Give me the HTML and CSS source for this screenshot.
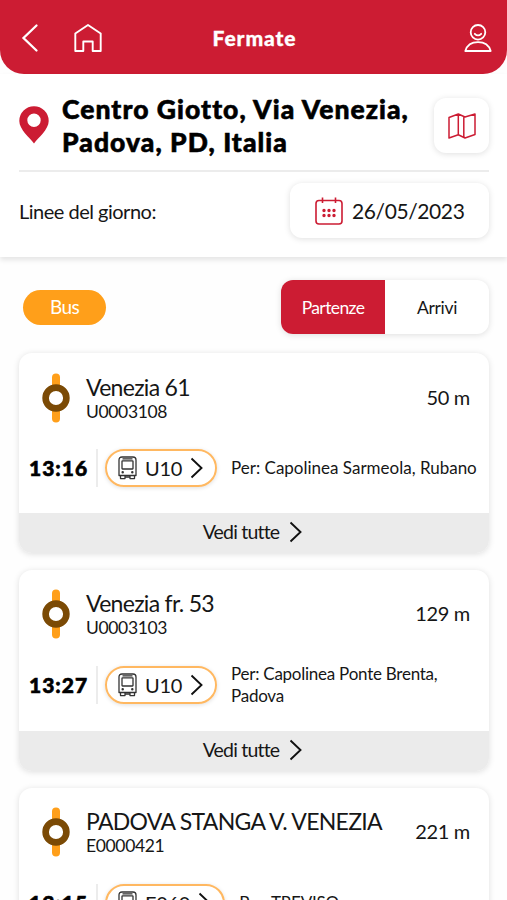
FILE: index.html
```html
<!DOCTYPE html>
<html lang="it">
<head>
	<meta charset="UTF-8">
	<meta name="viewport" content="width=device-width, initial-scale=1">
	<title>Fermate</title>
	<link rel="stylesheet" href="styles.css">
</head>
<body>
	<!-- shared icons -->
	<svg class="sprite" width="0" height="0">
		<symbol id="ico-stop" viewBox="0 0 28 50">
			<path d="M14 4.500V45.500" stroke="#ff9f1a" stroke-width="8" stroke-linecap="round"/>
			<circle cx="14" cy="25" r="10.400" fill="#fff" stroke="#7b4a05" stroke-width="6.600"/>
		</symbol>
		<symbol id="ico-bus" viewBox="0 0 19 24">
			<g fill="none" stroke="#333" stroke-width="1.300" stroke-linejoin="round">
				<path d="M1 19.500V4Q1 1 4 1H15Q18 1 18 4V19.500Z"/>
				<rect x="4" y="4.800" width="11" height="8.200" rx=".5"/>
				<path d="M4.500 2.900H14.500M2.500 19.500V22.600H7V19.500M12 19.500V22.600H16.500V19.500M7 21H12"/>
				<circle cx="4.700" cy="16.200" r=".6"/>
				<circle cx="14.300" cy="16.200" r=".6"/>
			</g>
		</symbol>
		<symbol id="ico-next" viewBox="0 0 13 22">
			<path d="M1.500 1.500L11.500 11L1.500 20.500" fill="none" stroke="#111" stroke-width="1.900"/>
		</symbol>
	</svg>

	<header class="topbar">
		<svg class="back" width="18" height="30" viewBox="0 0 18 30"><path d="M15.500 2.500L2.500 15L15.500 27.500" fill="none" stroke="#fff" stroke-width="2.300" stroke-linecap="round"/></svg>
		<svg class="home" width="28" height="30" viewBox="0 0 28 30"><path d="M1.300 10.500L14 2L26.700 10.500V28H18.700V18.500H9.300V28H1.300Z" fill="none" stroke="#fff" stroke-width="1.900" stroke-linejoin="round"/></svg>
		<h1>Fermate</h1>
		<svg class="user" width="28" height="30" viewBox="0 0 28 30">
			<g fill="none" stroke="#fff" stroke-width="1.800" stroke-linejoin="round" stroke-linecap="round">
				<circle cx="14" cy="9.300" r="7.300"/>
				<path d="M10.800 10.800Q14 14 17.200 10.800M1.300 28Q4 19.200 14 19.200T26.700 28Z"/>
			</g>
		</svg>
	</header>

	<section class="place">
		<div class="address">
			<svg class="pin" width="30" height="38" viewBox="0 0 30 38"><path fill-rule="evenodd" d="M15 37.500C11 32 .300 23.500 .300 15A14.700 14.700 0 0 1 29.700 15C29.700 23.500 19 32 15 37.500ZM15 7.600a6.700 6.700 0 1 0 0 13.400a6.700 6.700 0 1 0 0-13.400Z" fill="#cc1c33"/></svg>
			<h2>Centro Giotto, Via Venezia,<br>Padova, PD, Italia</h2>
			<a class="map" href="#">
				<svg width="28" height="26" viewBox="0 0 28 26"><path d="M1 4.500L10.300 1L17 4L27 1V21.500L17 25L10.300 21.800L1 25ZM10.300 1V21.800M15.800 4V24.600" fill="none" stroke="#cc1c33" stroke-width="1.500" stroke-linejoin="round"/></svg>
			</a>
		</div>
		<div class="day">
			<span class="day-label">Linee del giorno:</span>
			<a class="date" href="#">
				<svg width="28" height="28" viewBox="0 0 28 28">
					<rect x="1" y="3.500" width="26" height="23.500" rx="3" fill="none" stroke="#cc1c33" stroke-width="1.600"/>
					<path d="M7.500 .500V6M20.500 .500V6" stroke="#cc1c33" stroke-width="1.600"/>
					<path d="M9 13.500v.01M14 13.500v.01M19 13.500v.01M9 18.500v.01M14 18.500v.01M19 18.500v.01" stroke="#cc1c33" stroke-width="3.400" stroke-linecap="round"/>
				</svg>
				<span>26/05/2023</span>
			</a>
		</div>
	</section>

	<div class="filters">
		<a class="bus" href="#">Bus</a>
		<div class="switch">
			<a class="on" href="#">Partenze</a>
			<a href="#">Arrivi</a>
		</div>
	</div>

	<ul class="stops">
		<li class="card">
			<div class="stop">
				<svg width="28" height="50"><use href="#ico-stop"/></svg>
				<div class="name">
					<h3>Venezia 61</h3>
					<p>U0003108</p>
				</div>
				<span class="distance">50 m</span>
			</div>
			<div class="ride">
				<b class="time">13:16</b>
				<a class="line" href="#">
					<svg width="19" height="24"><use href="#ico-bus"/></svg>
					<span>U10</span>
					<svg width="13" height="22"><use href="#ico-next"/></svg>
				</a>
				<p class="to">Per: Capolinea Sarmeola, Rubano</p>
			</div>
			<a class="all" href="#"><span>Vedi tutte</span><svg width="13" height="22"><use href="#ico-next"/></svg></a>
		</li>
		<li class="card tall">
			<div class="stop">
				<svg width="28" height="50"><use href="#ico-stop"/></svg>
				<div class="name">
					<h3>Venezia fr. 53</h3>
					<p>U0003103</p>
				</div>
				<span class="distance">129 m</span>
			</div>
			<div class="ride">
				<b class="time">13:27</b>
				<a class="line" href="#">
					<svg width="19" height="24"><use href="#ico-bus"/></svg>
					<span>U10</span>
					<svg width="13" height="22"><use href="#ico-next"/></svg>
				</a>
				<p class="to">Per: Capolinea Ponte Brenta,<br>Padova</p>
			</div>
			<a class="all" href="#"><span>Vedi tutte</span><svg width="13" height="22"><use href="#ico-next"/></svg></a>
		</li>
		<li class="card tall">
			<div class="stop">
				<svg width="28" height="50"><use href="#ico-stop"/></svg>
				<div class="name">
					<h3>PADOVA STANGA V. VENEZIA</h3>
					<p>E0000421</p>
				</div>
				<span class="distance">221 m</span>
			</div>
			<div class="ride">
				<b class="time">13:15</b>
				<a class="line" href="#">
					<svg width="19" height="24"><use href="#ico-bus"/></svg>
					<span>E060</span>
					<svg width="13" height="22"><use href="#ico-next"/></svg>
				</a>
				<p class="to">Per: TREVISO</p>
			</div>
		</li>
	</ul>
</body>
</html>
```

FILE: styles.css
```css
*{margin:0;padding:0;box-sizing:border-box;}
html,body{
	height: 900px;
	overflow: hidden;
}
body{
	background: #fefefe;
	color: #161616;
	font-family: Lato,"Liberation Sans",sans-serif;
}
a{color: inherit;text-decoration: none;}
ul{list-style: none;}
svg{display: block;flex: none;}
.sprite{position: absolute;}

/* header */
.topbar{
	display: flex;
	align-items: center;
	height: 74px;
	padding: 2px 15px 0 21px;
	background: #cc1c33;
	color: #fff;
	border-radius: 0 0 24px 24px;
}
.home{margin-left: 35px;}
.topbar h1{
	flex: 1;
	padding-right: 57px;
	margin-top: -2px;
	text-align: center;
	font-size: 21px;
	font-weight: 900;
	letter-spacing: .9px;
	-webkit-text-stroke: .3px #fff;
}

/* address and date */
.place{
	height: 183px;
	padding: 20px 18px 0 19px;
	background: #fff;
	box-shadow: 0 3px 5px rgba(0,0,0,.1);
}
.address{
	display: flex;
	align-items: center;
	height: 78px;
	border-bottom: 2px solid #ececec;
	padding-bottom: 13px;
}
.pin{margin: -2px 13px 0 0;}
.address h2{
	flex: 1;
	white-space: nowrap;
	color: #000;
	font-size: 26.5px;
	line-height: 33px;
	font-weight: 900;
	letter-spacing: 1.05px;
	-webkit-text-stroke: .6px #000;
}
.map,.date,.switch{
	background: #fff;
	border-radius: 12px;
	box-shadow: 0 1px 6px rgba(0,0,0,.13);
}
.map{
	display: flex;
	align-items: center;
	justify-content: center;
	width: 55px;
	height: 55px;
}
.day{
	display: flex;
	align-items: center;
	justify-content: space-between;
	padding-top: 11px;
}
.day-label{
	font-size: 20px;
	letter-spacing: -.5px;
}
.date{
	display: flex;
	align-items: center;
	gap: 9px;
	width: 199px;
	height: 55px;
	padding-left: 25px;
	font-size: 21px;
	letter-spacing: -.4px;
}

/* filters */
.filters{
	display: flex;
	align-items: center;
	justify-content: space-between;
	padding: 23px 18px 0 23px;
}
.bus{
	width: 83px;
	height: 35px;
	line-height: 34px;
	border-radius: 18px;
	background: #ff9f1a;
	color: #fff;
	font-size: 19px;
	letter-spacing: -.6px;
	text-align: center;
}
.switch{
	display: flex;
	width: 208px;
	height: 54px;
	overflow: hidden;
}
.switch a{
	flex: 1;
	line-height: 56px;
	font-size: 17.5px;
	letter-spacing: -.3px;
	text-align: center;
}
.switch .on{
	background: #cc1c33;
	color: #fff;
	letter-spacing: -.6px;
}

/* stops */
.stops{
	display: grid;
	gap: 17px;
	padding: 19px 18px 0 19px;
}
.card{
	display: flex;
	flex-direction: column;
	height: 200px;
	border-radius: 13px;
	background: #fff;
	box-shadow: 0 1px 6px rgba(0,0,0,.13);
	overflow: hidden;
}
.card.tall{height: 201px;}
.stop{
	display: flex;
	align-items: center;
	height: 90px;
	padding: 0 19px 0 23px;
}
.tall .stop{height: 88px;}
.name{
	flex: 1;
	padding-left: 16px;
	white-space: nowrap;
}
.name h3{
	font-size: 23px;
	line-height: 26px;
	font-weight: 400;
	letter-spacing: -.7px;
}
.name p{
	font-size: 17.5px;
	line-height: 23px;
	letter-spacing: -.35px;
}
.distance{
	padding-bottom: 2px;
	font-size: 20px;
	letter-spacing: -.3px;
}
.ride{
	display: flex;
	align-items: center;
	height: 38px;
	margin-top: 6px;
	padding-left: 10px;
}
.tall .ride{margin-top: 8px;}
.time{
	width: 69px;
	height: 38px;
	line-height: 37px;
	border-right: 2px solid #ececec;
	color: #000;
	font-size: 21px;
	font-weight: 900;
	letter-spacing: 1px;
	-webkit-text-stroke: .6px #000;
}
.line{
	display: flex;
	align-items: center;
	height: 38px;
	margin-left: 7px;
	padding: 0 12px 0 11px;
	border: 2px solid #ffb861;
	border-radius: 19px;
	box-shadow: 0 1px 4px rgba(0,0,0,.13);
	font-size: 20px;
	letter-spacing: -.3px;
	line-height: 22px;
}
.line span{margin: -1px 8px 0 8px;}
.to{
	margin-left: 14px;
	font-size: 17px;
	line-height: 22px;
	white-space: nowrap;
}
.tall .to{letter-spacing: -.25px;}
.all{
	display: flex;
	align-items: center;
	justify-content: center;
	gap: 10px;
	height: 40px;
	margin-top: auto;
	padding: 0 3px 3px 0;
	background: #ebebeb;
	font-size: 19.5px;
	letter-spacing: -.8px;
}
```
